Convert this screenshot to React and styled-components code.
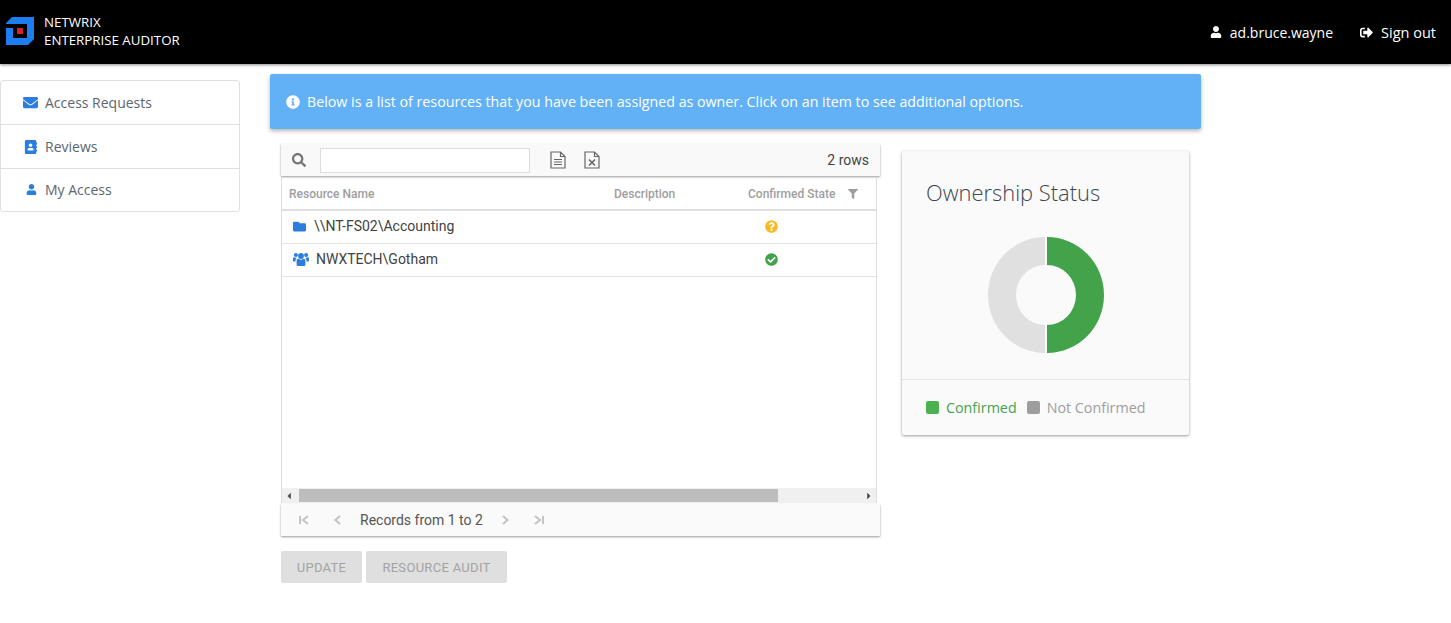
import React from "react";
import styled, { createGlobalStyle } from "styled-components";
import {
  FaEnvelope,
  FaAddressBook,
  FaUser,
  FaSignOutAlt,
  FaInfoCircle,
  FaSearch,
  FaFolder,
  FaQuestionCircle,
  FaCheckCircle,
  FaFilter,
  FaCaretLeft,
  FaCaretRight,
} from "react-icons/fa";

const GlobalStyle = createGlobalStyle`
  html, body {
    margin: 0;
    padding: 0;
    background: #fff;
    font-family: "Open Sans", sans-serif;
  }
  * { box-sizing: border-box; }
`;

const Page = styled.div`
  width: 1451px;
  height: 623px;
  overflow: hidden;
`;

const Header = styled.header`
  height: 64px;
  background: #000;
  color: #fff;
  display: flex;
  align-items: center;
  justify-content: space-between;
  padding: 0 15px 0 6px;
  box-shadow: 0 1px 3px rgba(0, 0, 0, 0.45);
`;

const Brand = styled.div`
  display: flex;
  align-items: center;
  gap: 10px;
  padding-bottom: 2px;
`;

const BrandText = styled.div`
  font-size: 13.3px;
  line-height: 18px;
  font-weight: 500;
`;

const UserBox = styled.div`
  display: flex;
  align-items: center;
  gap: 27px;
`;

const UserItem = styled.span`
  display: flex;
  align-items: center;
  gap: 8px;
  font-size: ${(p) => p.$size}px;
`;

const Body = styled.div`
  display: flex;
  align-items: flex-start;
`;

const Sidebar = styled.nav`
  width: 240px;
  margin-top: 16px;
  border: 1px solid #e0e0e0;
  border-radius: 3px;
`;

const NavItem = styled.div`
  height: 43.4px;
  display: flex;
  align-items: center;
  padding-left: ${(p) => p.$pad}px;
  gap: ${(p) => p.$gap}px;
  color: #5b6670;
  font-size: 14px;
  border-top: ${(p) => (p.$first ? "none" : "1px solid #e0e0e0")};
  svg { color: #2b7de0; }
`;

const Main = styled.main`
  width: 931px;
  margin: 10px 0 0 30px;
`;

const Alert = styled.div`
  height: 55px;
  background: #62b1f6;
  color: #fff;
  border-radius: 2px;
  display: flex;
  align-items: center;
  gap: 7px;
  padding-left: 16px;
  font-size: 14.24px;
  box-shadow: 0 2px 4px rgba(0, 0, 0, 0.3);
`;

const Content = styled.div`
  display: flex;
  align-items: flex-start;
  margin-top: 15px;
  padding-left: 11px;
`;

const GridColumn = styled.section`
  width: 599px;
`;

const Toolbar = styled.div`
  height: 32px;
  background: #f9f9f9;
  display: flex;
  align-items: center;
  padding: 0 11px;
  box-shadow: 0 1px 2px rgba(0, 0, 0, 0.4);
  font-family: Roboto, sans-serif;
  font-size: 14px;
  color: #444;
`;

const SearchIcon = styled(FaSearch)`
  color: #757575;
  margin-right: 14px;
`;

const SearchInput = styled.input`
  width: 210px;
  height: 25px;
  border: 1px solid #dcdcdc;
  background: #fff;
  margin-right: 20px;
  padding: 0;
  outline: none;
`;

const ToolIcon = styled.svg`
  width: 16px;
  height: 18px;
  margin-right: 18px;
  fill: none;
  stroke: #666;
  stroke-width: 1.2;
`;

const RowCount = styled.span`
  margin-left: auto;
`;

const Table = styled.div`
  width: 596px;
  height: 326px;
  margin-top: 1px;
  border-left: 1px solid #dedede;
  border-right: 1px solid #dedede;
  display: flex;
  flex-direction: column;
  font-family: Roboto, sans-serif;
`;

const Columns = "325px 134px 1fr";

const HeadRow = styled.div`
  height: 34px;
  padding-top: 1px;
  display: grid;
  grid-template-columns: ${Columns};
  align-items: center;
  border-bottom: 2px solid #e0e0e0;
  color: #9e9e9e;
  font-size: 12px;
  font-weight: 500;
  flex: none;
`;

const HeadCell = styled.div`
  padding-left: 7px;
  display: flex;
  align-items: center;
  justify-content: ${(p) => (p.$spread ? "space-between" : "flex-start")};
  padding-right: ${(p) => (p.$spread ? "18px" : "0")};
`;

const Row = styled.div`
  height: 33px;
  padding-bottom: 2px;
  display: grid;
  grid-template-columns: ${Columns};
  align-items: center;
  border-bottom: 1px solid #e4e4e4;
  color: #424242;
  font-size: 14px;
  flex: none;
`;

const NameCell = styled.div`
  display: flex;
  align-items: center;
  gap: ${(p) => p.$gap}px;
  padding-left: 11px;
  svg { color: #2b7de0; }
`;

const StateCell = styled.div`
  display: flex;
  padding-left: 24px;
  color: ${(p) => p.$color};
`;

const Spacer = styled.div`
  flex: 1;
`;

const Scrollbar = styled.div`
  height: 15px;
  background: #f0f0f0;
  display: flex;
  align-items: center;
  justify-content: space-between;
  padding: 0 2px;
  flex: none;
  color: #505050;
`;

const Thumb = styled.div`
  width: 479px;
  height: 13px;
  background: #bdbdbd;
  margin-left: 5px;
  margin-right: auto;
`;

const Pager = styled.div`
  height: 32px;
  background: #fafafa;
  display: flex;
  align-items: center;
  padding-left: 17px;
  font-family: Roboto, sans-serif;
  font-size: 14px;
  color: #555;
  box-shadow: 0 1px 2px rgba(0, 0, 0, 0.4);
  margin-top: 1px;
`;

const PagerIcon = styled.svg`
  width: 12px;
  height: 12px;
  margin-left: ${(p) => p.$before || 0}px;
  margin-right: ${(p) => p.$after}px;
  fill: none;
  stroke: #c4c4c4;
  stroke-width: 2;
  flex: none;
`;

const Actions = styled.div`
  display: flex;
  gap: 4px;
  margin-top: 15px;
`;

const ActionButton = styled.button`
  width: ${(p) => p.$width}px;
  height: 32px;
  border: none;
  border-radius: 2px;
  background: #dfdfdf;
  color: #a3a3a3;
  font-family: Roboto, sans-serif;
  font-size: 13px;
  letter-spacing: 0.3px;
  padding: 0;
`;

const ChartCard = styled.aside`
  width: 287px;
  height: 284px;
  margin: 7px 0 0 22px;
  background: #fafafa;
  border-radius: 2px;
  box-shadow: 0 1px 3px rgba(0, 0, 0, 0.4);
  display: flex;
  flex-direction: column;
`;

const ChartTitle = styled.h2`
  margin: 0;
  padding: 27px 0 0 24px;
  font-size: 21.9px;
  line-height: 30px;
  font-weight: 300;
  color: #3c4650;
`;

const DonutWrap = styled.div`
  height: 171px;
  padding-top: 28px;
  display: flex;
  justify-content: center;
`;

const Legend = styled.div`
  flex: 1;
  border-top: 1px solid #e4e4e4;
  display: flex;
  align-items: center;
  padding-left: 24px;
  font-size: 14.3px;
`;

const LegendItem = styled.span`
  display: flex;
  align-items: center;
  gap: 7px;
  margin-right: 10px;
  color: ${(p) => p.$color};
`;

const Swatch = styled.i`
  width: 13px;
  height: 13px;
  border-radius: 2px;
  background: ${(p) => p.$color};
`;

const Logo = () => (
  <svg width="28" height="28" viewBox="0 0 28 28">
    <path d="M0 6L6 0H28V22L22 28H0V11H7V21H21V7H0Z" fill="#1c7ef0" />
    <rect x="11" y="11" width="6" height="6" fill="#d3242c" />
  </svg>
);

const UsersIcon = () => (
  <svg width="16" height="14" viewBox="0 0 16 14" fill="currentColor">
    <circle cx="8" cy="4" r="2.9" />
    <circle cx="2.9" cy="3" r="2" />
    <circle cx="13.1" cy="3" r="2" />
    <path d="M3.6 8.8C3.6 7.4 4.6 6.8 5.6 6.8C6.4 7.4 7.2 7.7 8 7.7C8.8 7.7 9.6 7.4 10.4 6.8C11.4 6.8 12.4 7.4 12.4 8.8V12.4C12.4 13.4 11.8 14 10.8 14H5.2C4.2 14 3.6 13.4 3.6 12.4Z" />
    <path d="M0 6.8C0 5.8 .6 5.3 1.4 5.3C2 5.7 2.8 5.9 3.6 5.8C3.4 6.3 3.5 6.4 3 7C2.4 7.6 2.5 8.6 2.5 9.6H1C.4 9.6 0 9.2 0 8.6Z" />
    <path d="M16 6.8C16 5.8 15.4 5.3 14.6 5.3C14 5.7 13.2 5.9 12.4 5.8C12.6 6.3 12.5 6.4 13 7C13.6 7.6 13.5 8.6 13.5 9.6H15C15.6 9.6 16 9.2 16 8.6Z" />
  </svg>
);

const Donut = () => (
  <svg width="118" height="118" viewBox="0 0 118 118">
    <path d="M58 1A57 58 0 0 0 58 117V89A29 30 0 0 1 58 29Z" fill="#e0e0e0" />
    <path d="M60 1A57 58 0 0 1 60 117V89A29 30 0 0 0 60 29Z" fill="#43a34b" />
  </svg>
);

const App = () => (
  <Page>
    <GlobalStyle />
    <Header>
      <Brand>
        <Logo />
        <BrandText>
          NETWRIX
          <br />
          ENTERPRISE AUDITOR
        </BrandText>
      </Brand>
      <UserBox>
        <UserItem $size={14}>
          <FaUser size={12} />
          ad.bruce.wayne
        </UserItem>
        <UserItem $size={14.5}>
          <FaSignOutAlt size={13} />
          Sign out
        </UserItem>
      </UserBox>
    </Header>
    <Body>
      <Sidebar>
        <NavItem $first $pad={22} $gap={7}>
          <FaEnvelope size={15} />
          Access Requests
        </NavItem>
        <NavItem $pad={23} $gap={7}>
          <FaAddressBook size={14} />
          Reviews
        </NavItem>
        <NavItem $pad={25} $gap={8}>
          <FaUser size={11} />
          My Access
        </NavItem>
      </Sidebar>
      <Main>
        <Alert>
          <FaInfoCircle size={14} />
          Below is a list of resources that you have been assigned as owner. Click on an item to see additional options.
        </Alert>
        <Content>
          <GridColumn>
            <Toolbar>
              <SearchIcon size={14} />
              <SearchInput />
              <ToolIcon viewBox="0 0 16 18">
                <path d="M1 1H10.5L15 5.5V17H1ZM10.5 1V5.5H15" />
                <path d="M4 8.5H12M4 11H12M4 13.5H12" />
              </ToolIcon>
              <ToolIcon viewBox="0 0 16 18">
                <path d="M1 1H10.5L15 5.5V17H1ZM10.5 1V5.5H15" />
                <path d="M5 8.5L11 14.5M11 8.5L5 14.5" strokeWidth="1.6" />
              </ToolIcon>
              <RowCount>2 rows</RowCount>
            </Toolbar>
            <Table>
              <HeadRow>
                <HeadCell>Resource Name</HeadCell>
                <HeadCell>Description</HeadCell>
                <HeadCell $spread>
                  Confirmed State
                  <FaFilter size={10} />
                </HeadCell>
              </HeadRow>
              <Row>
                <NameCell $gap={8}>
                  <FaFolder size={13} />
                  \\NT-FS02\Accounting
                </NameCell>
                <div />
                <StateCell $color="#f9b922">
                  <FaQuestionCircle size={13} />
                </StateCell>
              </Row>
              <Row>
                <NameCell $gap={7}>
                  <UsersIcon />
                  NWXTECH\Gotham
                </NameCell>
                <div />
                <StateCell $color="#43a34b">
                  <FaCheckCircle size={13} />
                </StateCell>
              </Row>
              <Spacer />
              <Scrollbar>
                <FaCaretLeft size={10} />
                <Thumb />
                <FaCaretRight size={10} />
              </Scrollbar>
            </Table>
            <Pager>
              <PagerIcon viewBox="0 0 12 12" $after={22}>
                <path d="M2 2V10M10 2L5 6L10 10" />
              </PagerIcon>
              <PagerIcon viewBox="0 0 12 12" $after={16}>
                <path d="M8 2L3.5 6L8 10" />
              </PagerIcon>
              <span>Records from 1 to 2</span>
              <PagerIcon viewBox="0 0 12 12" $before={16} $after={22}>
                <path d="M4 2L8.5 6L4 10" />
              </PagerIcon>
              <PagerIcon viewBox="0 0 12 12" $after={0}>
                <path d="M2 2L7 6L2 10M10 2V10" />
              </PagerIcon>
            </Pager>
            <Actions>
              <ActionButton $width={81} disabled>
                UPDATE
              </ActionButton>
              <ActionButton $width={141} disabled>
                RESOURCE AUDIT
              </ActionButton>
            </Actions>
          </GridColumn>
          <ChartCard>
            <ChartTitle>Ownership Status</ChartTitle>
            <DonutWrap>
              <Donut />
            </DonutWrap>
            <Legend>
              <LegendItem $color="#43a34b">
                <Swatch $color="#4caf50" />
                Confirmed
              </LegendItem>
              <LegendItem $color="#9e9e9e">
                <Swatch $color="#9e9e9e" />
                Not Confirmed
              </LegendItem>
            </Legend>
          </ChartCard>
        </Content>
      </Main>
    </Body>
  </Page>
);

export default App;
